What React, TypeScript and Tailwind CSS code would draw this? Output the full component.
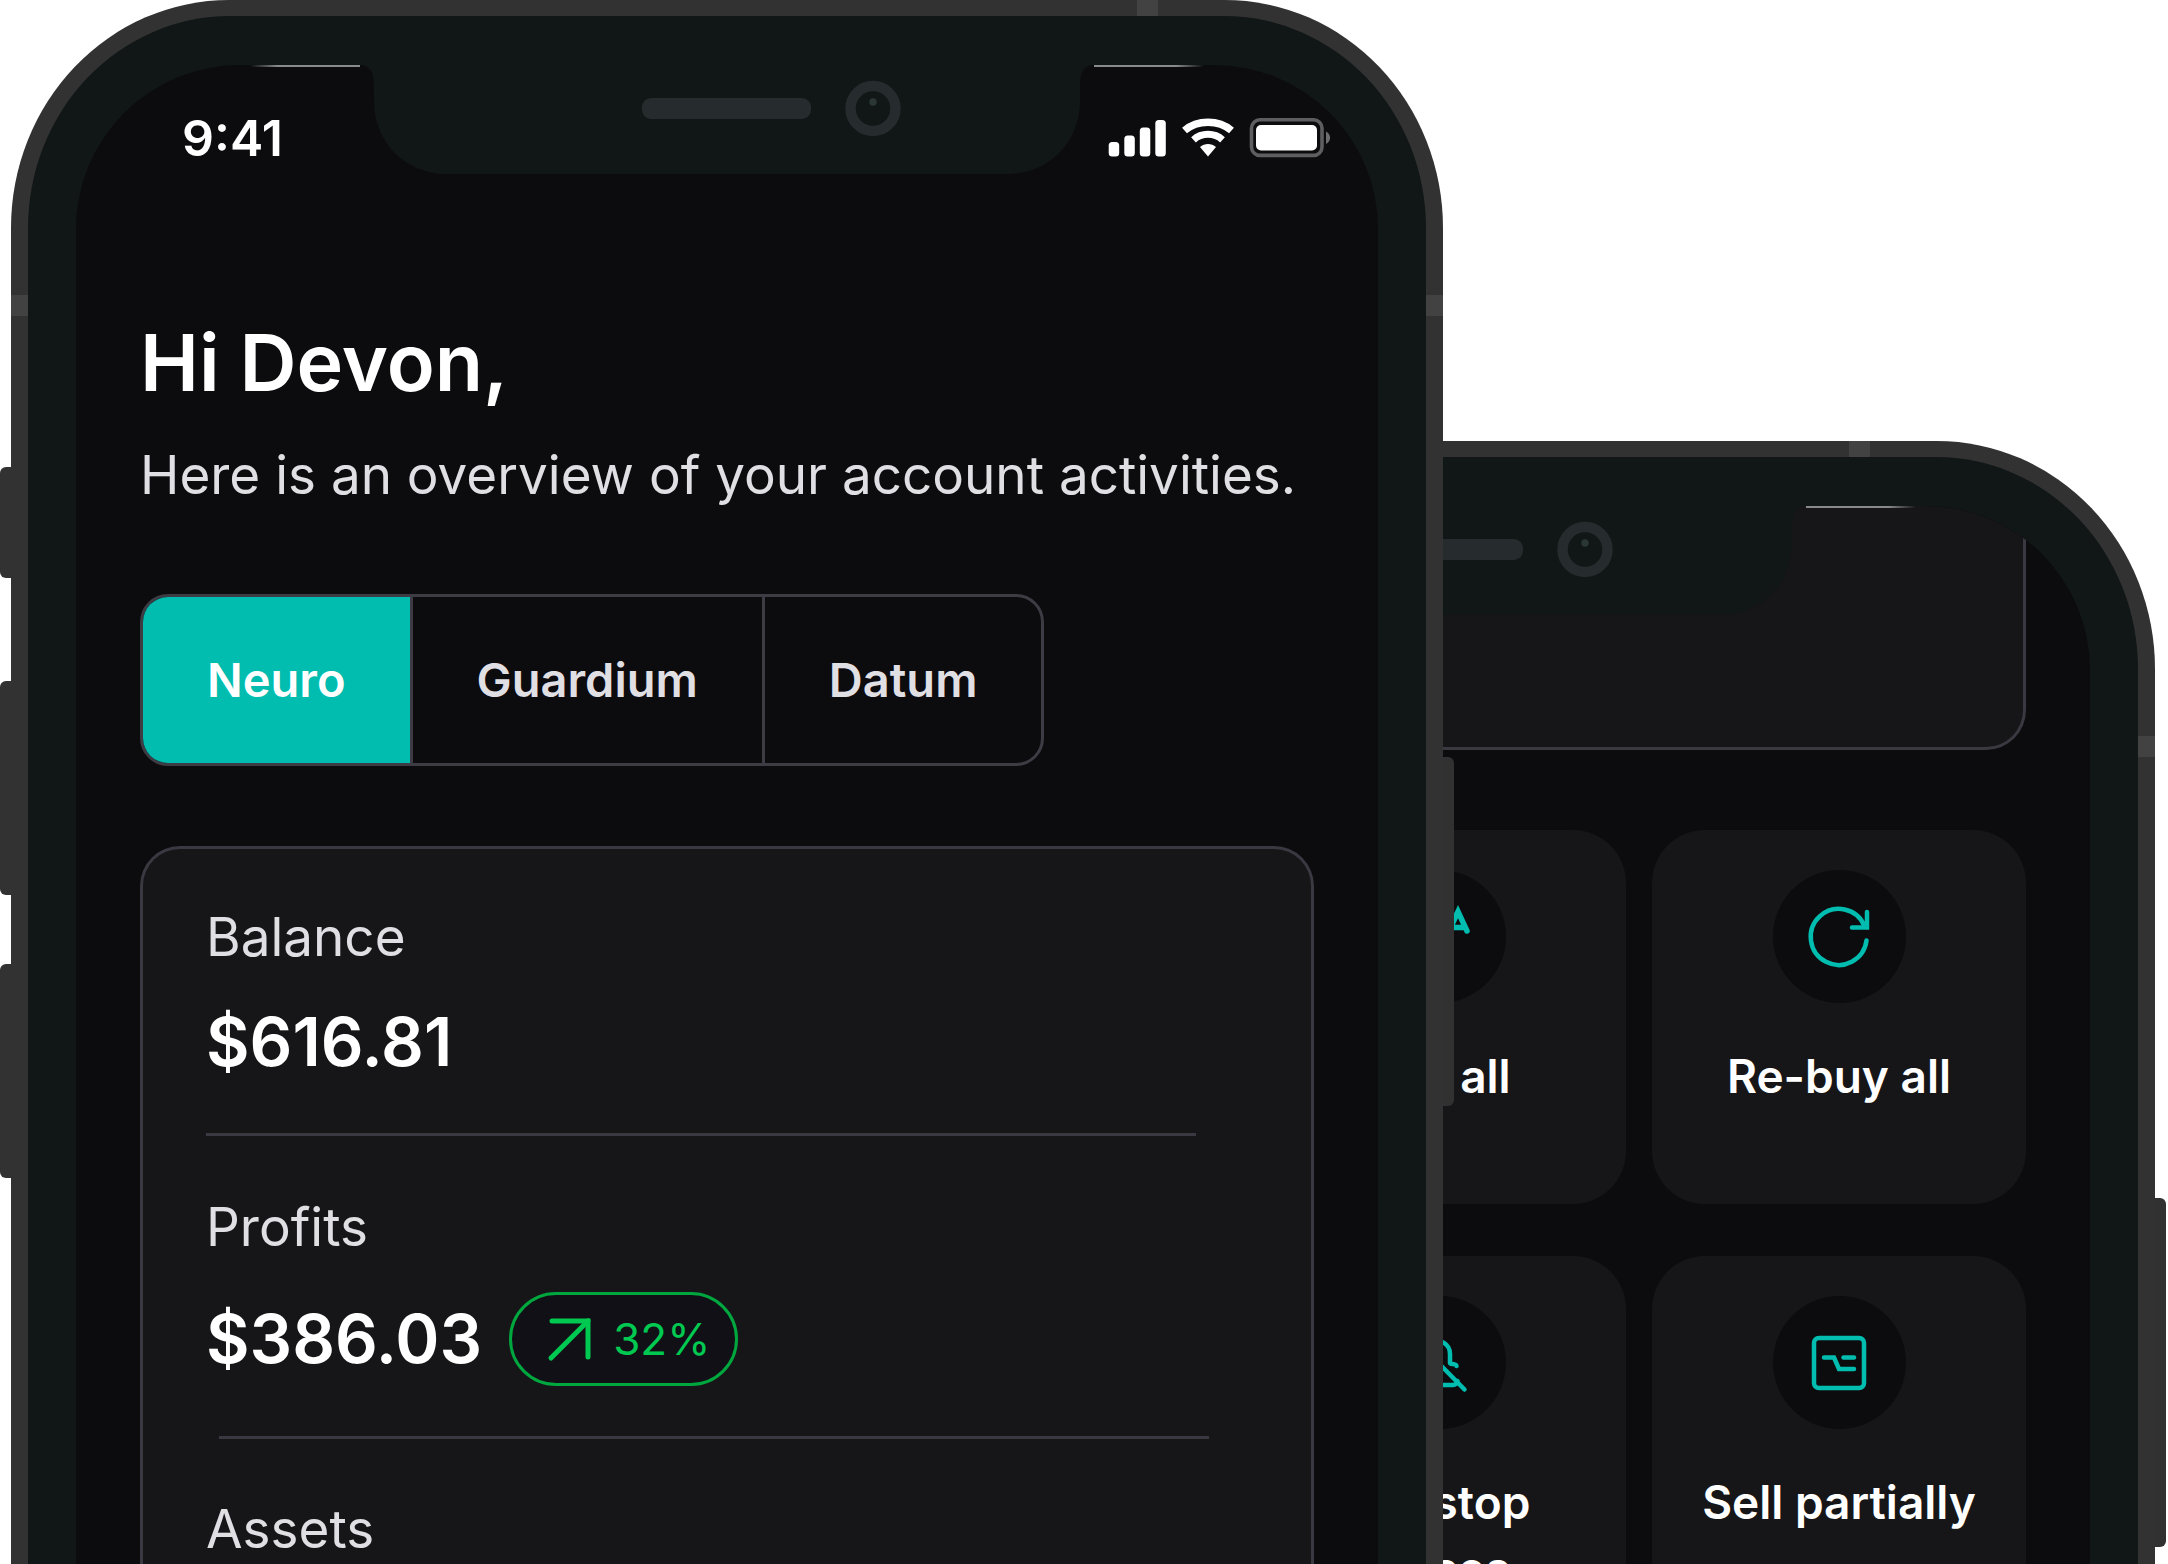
import { useState, type ReactNode } from "react";
import { clsx } from "clsx";

const accounts = ["Neuro", "Guardium", "Datum"];

function Notch() {
  return (
    <svg width="734" height="110" viewBox="0 0 734 110" className="shrink-0" aria-hidden="true">
      <path
        d="M0 0C10 0 14 8 14 20V36C14 78 46 109 86 109H648C688 109 720 78 720 36V20C720 8 724 0 734 0Z"
        fill="#111616"
      />
      <rect x="282" y="33" width="169" height="21" rx="9" fill="#262b2d" />
      <circle cx="513" cy="43.5" r="22.5" fill="none" stroke="#262b2d" strokeWidth="10.5" />
      <circle cx="513" cy="37" r="3.7" fill="#2b3735" />
    </svg>
  );
}

function Phone({ className, children }: { className?: string; children: ReactNode }) {
  return (
    <div className={clsx("relative flex flex-col px-[11px]", className)}>
      {/* side keys */}
      <div className="absolute left-0 top-[467px] h-[111px] w-4 rounded-l-md bg-[#323232]" />
      <div className="absolute left-0 top-[681px] h-[214px] w-4 rounded-l-md bg-[#323232]" />
      <div className="absolute left-0 top-[964px] h-[214px] w-4 rounded-l-md bg-[#323232]" />
      <div className="absolute right-0 top-[757px] h-[349px] w-4 rounded-r-md bg-[#313131]" />

      <div className="relative flex flex-1 flex-col rounded-[218px_218px_0_0/228px_228px_0_0] bg-[#323232] px-[17px] pt-4">
        {/* antenna bands */}
        <div className="absolute right-[285px] top-0 h-4 w-[21px] bg-[#424242]" />
        <div className="absolute inset-x-0 top-[295px] h-[21px] bg-[#424242]" />

        <div className="relative flex flex-1 flex-col rounded-[202px_202px_0_0/212px_212px_0_0] bg-[#111616] px-12 pt-[49px]">
          <div className="relative flex flex-1 flex-col overflow-hidden rounded-t-[164px] bg-[#0c0c0e]">
            <div className="absolute inset-x-0 top-0 flex">
              <div className="flex flex-1 justify-end">
                <div className="h-0.5 w-[110px] bg-linear-to-r from-transparent to-[#8a8a8a] to-25%" />
              </div>
              <Notch />
              <div className="flex flex-1">
                <div className="h-0.5 w-[110px] bg-linear-to-l from-transparent to-[#8a8a8a] to-25%" />
              </div>
            </div>
            {children}
          </div>
        </div>
      </div>
    </div>
  );
}

function StatusIcons() {
  return (
    <svg width="223" height="40" viewBox="0 0 223 40" fill="#fff" aria-hidden="true">
      <rect x="0.7" y="24" width="10.5" height="14.5" rx="3.5" />
      <rect x="16.3" y="17.5" width="10.5" height="21" rx="3.5" />
      <rect x="31.8" y="9.5" width="10.5" height="29" rx="3.5" />
      <rect x="47.3" y="2" width="10.5" height="36.5" rx="3.5" />
      <g fill="none" stroke="#fff">
        <path d="M76.5 12.5C89.5 1.5 110.5 1.5 123.5 12.5" strokeWidth="7.5" />
        <path d="M85.5 21.8C93.5 14.5 106.5 14.5 114.5 21.8" strokeWidth="7" />
      </g>
      <path d="M92 29C96.5 25 103.5 25 108 29L100 38.5Z" />
      <rect x="143.5" y="1.8" width="70.5" height="35.6" rx="8.5" fill="none" stroke="#5e5e60" strokeWidth="3.6" />
      <rect x="148" y="7" width="61" height="25.5" rx="5" />
      <path d="M218 13.5C223.5 16 223.5 23.5 218 26Z" fill="#6d6d6f" />
    </svg>
  );
}

function Tabs() {
  const [active, setActive] = useState("Neuro");
  return (
    <div className="mt-[79px] flex self-start overflow-hidden rounded-[28px] border-3 border-[#3d3c45]">
      {accounts.map((name) => (
        <button
          key={name}
          type="button"
          onClick={() => setActive(name)}
          className={clsx(
            "border-l-3 border-[#3d3c45] px-16 py-12 text-[47px] leading-[70px] font-semibold first:border-l-0",
            name === active ? "bg-[#00bdb0] text-white" : "text-[#e0dfe4]",
          )}
        >
          {name}
        </button>
      ))}
    </div>
  );
}

function Stat({ label, value, change }: { label: string; value?: string; change?: string }) {
  return (
    <div>
      <p className="text-[53px] leading-20 text-[#e0dfe4]">{label}</p>
      {value && (
        <div className="mt-[25px] flex items-center gap-[27px]">
          <span className="text-[67px] leading-20 font-semibold text-white">{value}</span>
          {change && (
            <span className="flex h-[94px] items-center gap-[18px] rounded-full border-3 border-[#00a63e] bg-[#111016] px-[25px] text-[44px] text-[#00c951]">
              <svg
                width="58"
                height="58"
                viewBox="0 0 58 58"
                fill="none"
                stroke="currentColor"
                strokeWidth="5"
                strokeLinecap="round"
                aria-hidden="true"
              >
                <path d="M14 48L51 11" />
                <path d="M15 11H51V47" />
              </svg>
              {change}
            </span>
          )}
        </div>
      )}
    </div>
  );
}

function Overview() {
  return (
    <>
      <div className="flex items-center justify-between pt-[49px] pr-[47px] pl-[106px]">
        <span className="text-[50px] leading-12 font-semibold text-white">9:41</span>
        <StatusIcons />
      </div>
      <div className="mt-[152px] flex flex-1 flex-col px-16">
        <h1 className="text-[79px] leading-24 font-semibold text-white">Hi Devon,</h1>
        <p className="mt-[25px] text-[53px] leading-20 whitespace-nowrap text-[#e0dfe4]">
          Here is an overview of your account activities.
        </p>
        <Tabs />
        <section className="mt-20 flex-1 rounded-t-[40px] border-3 border-b-0 border-[#3a3942] bg-[#161618] px-[63px] pt-12">
          <Stat label="Balance" value="$616.81" />
          <hr className="my-[51px] w-[95%] border-t-3 border-[#3a3942]" />
          <Stat label="Profits" value="$386.03" change="32%" />
          <hr className="my-[50px] ml-[13px] w-[95%] border-t-3 border-[#3a3942]" />
          <Stat label="Assets" />
        </section>
      </div>
    </>
  );
}

const actions = [
  {
    label: "Sell all",
    icon: (
      <>
        <path d="M42 12L16 44H38L34 68L52 46" />
        <path d="M50 34L59 14.5L68 34M53 30.5H66" strokeWidth="5.5" />
      </>
    ),
  },
  {
    label: "Re-buy all",
    icon: (
      <>
        <path d="M67.5 43.5A28 28 0 1 1 65.5 29" />
        <path d="M68 15V30.5H53" />
      </>
    ),
  },
  {
    label: "Set stop losses",
    icon: (
      <>
        <path d="M14.5 14.5L65.5 66.5" />
        <path d="M33 20C41 15 51 21 51 31V40C51 42 57 40 57.5 43" />
        <path d="M27 30V41L21 56C20 60 22 62 25 62H54C57 62 58 60 58.5 58" />
      </>
    ),
  },
  {
    label: "Sell partially",
    icon: (
      <>
        <rect x="15" y="15" width="50" height="50" rx="5" />
        <path d="M25 34.5H35L40 46H55" />
        <path d="M44.5 34.5H55" />
      </>
    ),
  },
];

function Actions() {
  return (
    <div className="px-16">
      <div className="h-[244px] rounded-b-[40px] border-3 border-t-0 border-[#3a3942] bg-[#161618]" />
      {/* the first column stays free, the front phone covers it */}
      <div className="mt-20 grid grid-cols-3 gap-x-[26px] gap-y-[52px]">
        {actions.map((action, i) => (
          <button
            key={action.label}
            type="button"
            className={clsx(
              "flex aspect-square flex-col items-center gap-10 rounded-[53px] bg-[#161618] px-8 pt-10",
              i % 2 === 0 && "col-start-2",
            )}
          >
            <span className="flex size-[133px] shrink-0 items-center justify-center rounded-full bg-[#0c0c0e]">
              <svg
                width="80"
                height="80"
                viewBox="0 0 80 80"
                fill="none"
                stroke="#00bdb0"
                strokeWidth="4.5"
                strokeLinecap="round"
                aria-hidden="true"
              >
                {action.icon}
              </svg>
            </span>
            <span className="max-w-[300px] text-[46px] leading-[66px] font-semibold text-white">{action.label}</span>
          </button>
        ))}
      </div>
    </div>
  );
}

export default function App() {
  return (
    <main className="grid h-screen grid-cols-[712fr_742fr_712fr] overflow-hidden bg-white pr-0.5 font-[Inter,sans-serif]">
      <Phone className="z-10 col-span-2 col-start-1 row-start-1">
        <Overview />
      </Phone>
      <Phone className="col-span-2 col-start-2 row-start-1 mt-[441px]">
        <Actions />
      </Phone>
    </main>
  );
}
